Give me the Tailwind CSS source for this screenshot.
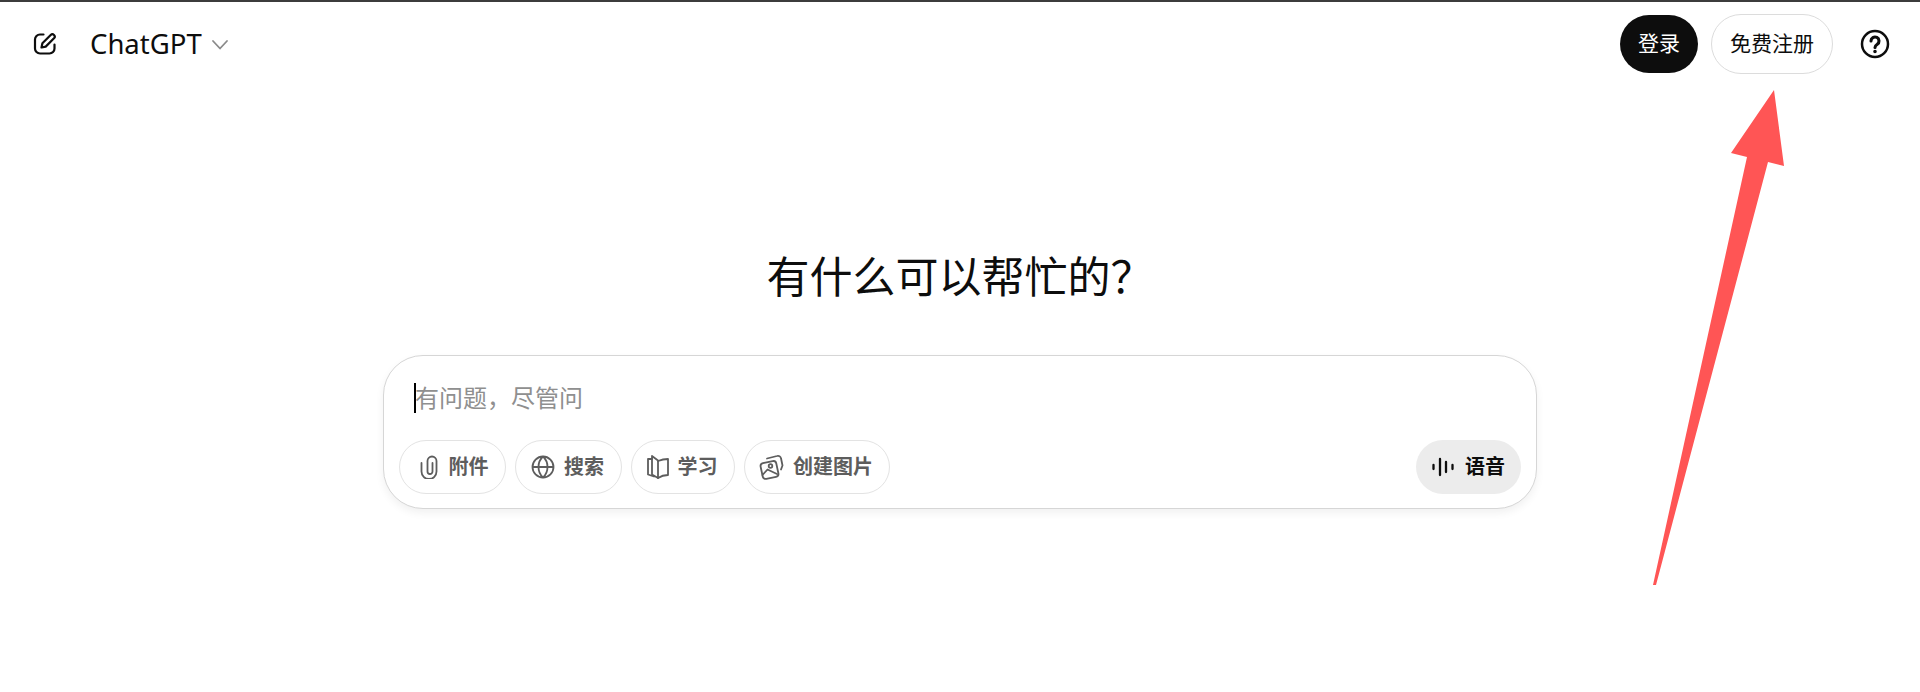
<!DOCTYPE html>
<html lang="zh-CN">
<head>
  <meta charset="UTF-8" />
  <meta name="viewport" content="width=device-width, initial-scale=1" />
  <title>ChatGPT</title>
  <script src="https://cdn.jsdelivr.net/npm/@tailwindcss/browser@4"></script>
</head>
<body class="relative h-[692px] overflow-hidden bg-white font-['Noto_Sans','Noto_Sans_CJK_SC',sans-serif] text-[#0d0d0d]">

  <div class="h-[2px] bg-[#3c3c3c]"></div>

  <!-- Top bar -->
  <header class="flex h-[84px] items-center justify-between pl-[33px] pr-[30px]">
    <div class="flex items-center">
      <svg class="h-6 w-6" viewBox="0 0 24 24" fill="none" stroke="#0d0d0d" stroke-width="2.200" stroke-linecap="round" stroke-linejoin="round">
        <path d="M10.500 2.500H7a5 5 0 0 0-5 5v9a5 5 0 0 0 5 5h9.500a5 5 0 0 0 5-5v-4" />
        <path d="M8.500 15.500l.9-4.200 8.300-8.300a2.300 2.300 0 0 1 3.300 3.300l-8.300 8.300z" />
      </svg>
      <span class="ml-[33px] text-[27.500px] leading-none">ChatGPT</span>
      <svg class="ml-[9px] mt-[2px] h-[12px] w-[18px]" viewBox="0 0 18 12" fill="none" stroke="#8a8a8a" stroke-width="1.800" stroke-linecap="round" stroke-linejoin="round">
        <path d="M2 2l7 7.500 7-7.500" />
      </svg>
    </div>
    <div class="flex items-center">
      <button class="h-[58px] w-[78px] rounded-full bg-[#0d0d0d] text-[21px] text-white">登录</button>
      <button class="ml-[13px] h-[60px] w-[122px] rounded-full border border-[#dcdcdc] bg-white text-[21px]">免费注册</button>
      <svg class="ml-[27px] h-[30px] w-[30px]" viewBox="0 0 30 30" fill="none" stroke="#0d0d0d" stroke-width="2.500" stroke-linecap="round">
        <circle cx="15" cy="15" r="13" />
        <path d="M11 12a4 4 0 1 1 6.300 3.300c-1.300.9-2.300 1.700-2.300 3.200" stroke-width="3.100" />
        <circle cx="15" cy="22.500" r="0.800" fill="#0d0d0d" stroke-width="2" />
      </svg>
    </div>
  </header>

  <!-- Center column -->
  <main class="flex flex-col items-center pt-[163px]">
    <h1 class="text-[43px] leading-[56px]">有什么可以帮忙的？</h1>

    <div class="mt-[50px] h-[154px] w-[1154px] rounded-[40px] border border-[#d6d6d6] bg-white px-[15px] shadow-[0_4px_8px_rgba(0,0,0,0.06)]">
      <div class="flex h-[84px] items-center pl-[15px]">
        <span class="h-[30px] w-[2px] bg-black"></span>
        <span class="-ml-[1px] text-[24px] leading-none text-[#8f8f8f]">有问题，尽管问</span>
      </div>
      <div class="flex items-center justify-between">
        <div class="flex gap-[9px]">
          <button class="flex h-[54px] w-[107px] items-center justify-center gap-[8px] rounded-full border border-[#e3e3e3] text-[20px] font-bold text-[#5d5d5d]">
            <svg class="h-[24px] w-[24px]" viewBox="0 0 24 24" fill="none" stroke="#5d5d5d" stroke-width="1.800" stroke-linecap="round">
              <path d="M4.500 8v8.500a7.500 7.500 0 0 0 15 0V6a4.500 4.500 0 0 0-9 0v10.500a2.500 2.500 0 0 0 5 0V8" />
            </svg>
            附件
          </button>
          <button class="flex h-[54px] w-[107px] items-center justify-center gap-[9px] rounded-full border border-[#e3e3e3] pr-[2px] text-[20px] font-bold text-[#5d5d5d]">
            <svg class="h-[24px] w-[24px]" viewBox="0 0 24 24" fill="none" stroke="#5d5d5d" stroke-width="1.800">
              <circle cx="12" cy="12" r="10.500" />
              <path d="M1.500 12h21M12 1.500c-6 5.500-6 15.500 0 21M12 1.500c6 5.500 6 15.500 0 21" />
            </svg>
            搜索
          </button>
          <button class="flex h-[54px] w-[104px] items-center justify-center gap-[8px] rounded-full border border-[#e3e3e3] pr-[3px] text-[20px] font-bold text-[#5d5d5d]">
            <svg class="h-[24px] w-[24px]" viewBox="0 0 24 24" fill="none" stroke="#5d5d5d" stroke-width="1.800" stroke-linecap="round" stroke-linejoin="round">
              <path d="M6 1l6 4.500v17.500l-6-3.500z" />
              <path d="M6 4H2v15.500l6 2" />
              <path d="M12 6c3-1.200 6-2 10-2v16c-4 0-7 1-10 3" />
            </svg>
            学习
          </button>
          <button class="flex h-[54px] w-[146px] items-center justify-center gap-[8px] rounded-full border border-[#e3e3e3] pr-[2px] text-[20px] font-bold text-[#5d5d5d]">
            <svg class="h-[26px] w-[26px]" viewBox="0 0 26 26" fill="none" stroke="#5d5d5d" stroke-width="1.800" stroke-linecap="round" stroke-linejoin="round">
              <rect x="2.500" y="8" width="16" height="16" rx="3" transform="rotate(-12 10.500 16)" />
              <path d="M8 4.500l10-2.500a3 3 0 0 1 4 2.300l1.500 7.200-1.500 4" />
              <circle cx="11.500" cy="12" r="1.800" />
              <path d="M3.500 21l5-5.500 9.500 4.500" />
            </svg>
            创建图片
          </button>
        </div>
        <button class="flex h-[54px] w-[105px] items-center justify-center gap-[11px] rounded-full bg-[#ececec] text-[20px] font-bold">
          <svg class="h-[22px] w-[22px]" viewBox="0 0 22 22" fill="none" stroke="#0d0d0d" stroke-width="2.300" stroke-linecap="round">
            <path d="M1.500 9v4M8 3v16M14 6v10M20.500 9v4" />
          </svg>
          语音
        </button>
      </div>
    </div>
  </main>

  <!-- Annotation arrow drawn on top of the screenshot -->
  <svg class="pointer-events-none absolute left-0 top-0" width="1920" height="692" viewBox="0 0 1920 692">
    <polygon points="1774,90 1784,166 1768,162 1656,585 1653,585 1747,157 1731,153" fill="#ff5555" />
  </svg>
</body>
</html>
